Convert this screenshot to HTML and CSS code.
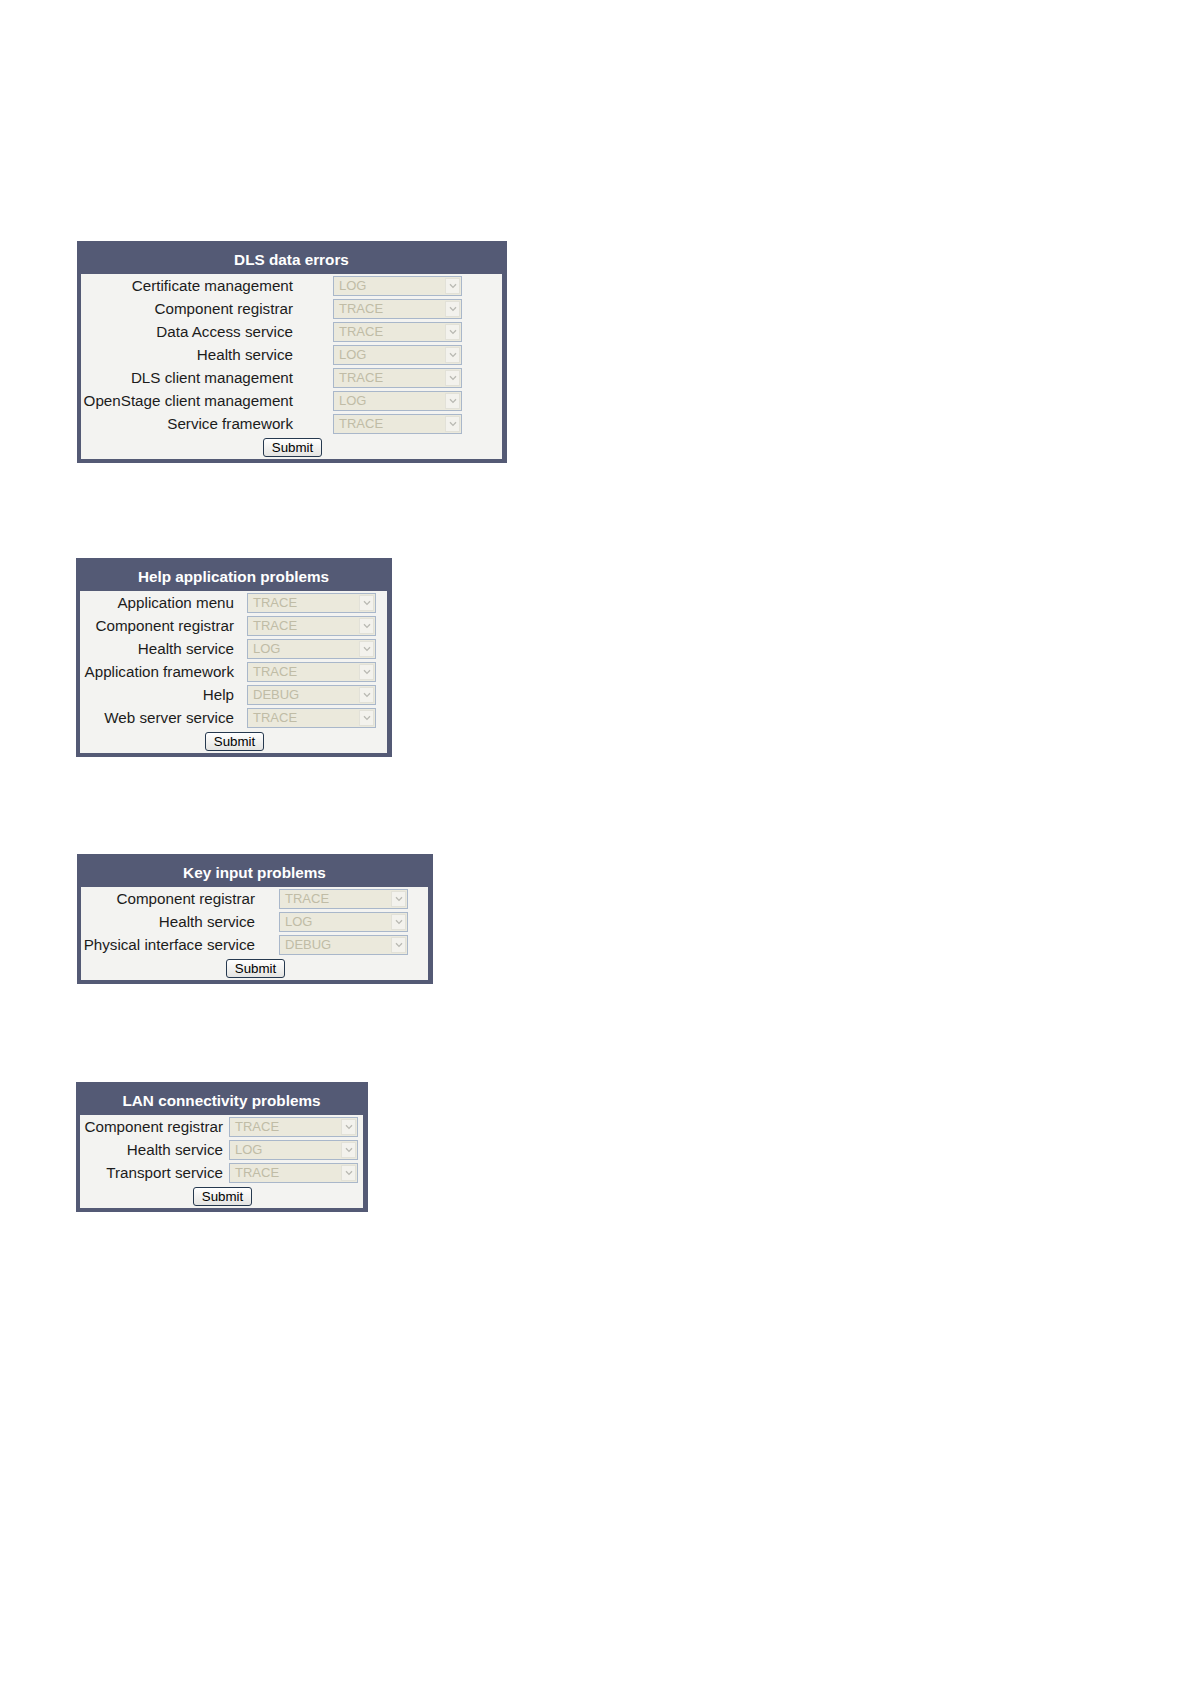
FILE: index.html
```html
<!DOCTYPE html>
<html lang="en">
<head>
<meta charset="utf-8">
<title>Trace levels</title>
<link rel="stylesheet" href="styles.css">
</head>
<body>
<main class="page">

  <section class="panel panel-dls">
    <h2 class="panel-head">DLS data errors</h2>
    <form class="panel-body">
      <div class="rows">
        <span class="lbl">Certificate management</span><div class="sel"><span class="val">LOG</span><span class="arr"><svg viewBox="0 0 8 6" width="8" height="6"><path d="M1 1.2 L4 4.4 L7 1.2" fill="none" stroke="#b9b9b3" stroke-width="1.3"/></svg></span></div>
        <span class="lbl">Component registrar</span><div class="sel"><span class="val">TRACE</span><span class="arr"><svg viewBox="0 0 8 6" width="8" height="6"><path d="M1 1.2 L4 4.4 L7 1.2" fill="none" stroke="#b9b9b3" stroke-width="1.3"/></svg></span></div>
        <span class="lbl">Data Access service</span><div class="sel"><span class="val">TRACE</span><span class="arr"><svg viewBox="0 0 8 6" width="8" height="6"><path d="M1 1.2 L4 4.4 L7 1.2" fill="none" stroke="#b9b9b3" stroke-width="1.3"/></svg></span></div>
        <span class="lbl">Health service</span><div class="sel"><span class="val">LOG</span><span class="arr"><svg viewBox="0 0 8 6" width="8" height="6"><path d="M1 1.2 L4 4.4 L7 1.2" fill="none" stroke="#b9b9b3" stroke-width="1.3"/></svg></span></div>
        <span class="lbl">DLS client management</span><div class="sel"><span class="val">TRACE</span><span class="arr"><svg viewBox="0 0 8 6" width="8" height="6"><path d="M1 1.2 L4 4.4 L7 1.2" fill="none" stroke="#b9b9b3" stroke-width="1.3"/></svg></span></div>
        <span class="lbl">OpenStage client management</span><div class="sel"><span class="val">LOG</span><span class="arr"><svg viewBox="0 0 8 6" width="8" height="6"><path d="M1 1.2 L4 4.4 L7 1.2" fill="none" stroke="#b9b9b3" stroke-width="1.3"/></svg></span></div>
        <span class="lbl">Service framework</span><div class="sel"><span class="val">TRACE</span><span class="arr"><svg viewBox="0 0 8 6" width="8" height="6"><path d="M1 1.2 L4 4.4 L7 1.2" fill="none" stroke="#b9b9b3" stroke-width="1.3"/></svg></span></div>
      </div>
      <div class="actions"><button type="button" class="submit">Submit</button></div>
    </form>
  </section>

  <section class="panel panel-help">
    <h2 class="panel-head">Help application problems</h2>
    <form class="panel-body">
      <div class="rows">
        <span class="lbl">Application menu</span><div class="sel"><span class="val">TRACE</span><span class="arr"><svg viewBox="0 0 8 6" width="8" height="6"><path d="M1 1.2 L4 4.4 L7 1.2" fill="none" stroke="#b9b9b3" stroke-width="1.3"/></svg></span></div>
        <span class="lbl">Component registrar</span><div class="sel"><span class="val">TRACE</span><span class="arr"><svg viewBox="0 0 8 6" width="8" height="6"><path d="M1 1.2 L4 4.4 L7 1.2" fill="none" stroke="#b9b9b3" stroke-width="1.3"/></svg></span></div>
        <span class="lbl">Health service</span><div class="sel"><span class="val">LOG</span><span class="arr"><svg viewBox="0 0 8 6" width="8" height="6"><path d="M1 1.2 L4 4.4 L7 1.2" fill="none" stroke="#b9b9b3" stroke-width="1.3"/></svg></span></div>
        <span class="lbl">Application framework</span><div class="sel"><span class="val">TRACE</span><span class="arr"><svg viewBox="0 0 8 6" width="8" height="6"><path d="M1 1.2 L4 4.4 L7 1.2" fill="none" stroke="#b9b9b3" stroke-width="1.3"/></svg></span></div>
        <span class="lbl">Help</span><div class="sel"><span class="val">DEBUG</span><span class="arr"><svg viewBox="0 0 8 6" width="8" height="6"><path d="M1 1.2 L4 4.4 L7 1.2" fill="none" stroke="#b9b9b3" stroke-width="1.3"/></svg></span></div>
        <span class="lbl">Web server service</span><div class="sel"><span class="val">TRACE</span><span class="arr"><svg viewBox="0 0 8 6" width="8" height="6"><path d="M1 1.2 L4 4.4 L7 1.2" fill="none" stroke="#b9b9b3" stroke-width="1.3"/></svg></span></div>
      </div>
      <div class="actions"><button type="button" class="submit">Submit</button></div>
    </form>
  </section>

  <section class="panel panel-key">
    <h2 class="panel-head">Key input problems</h2>
    <form class="panel-body">
      <div class="rows">
        <span class="lbl">Component registrar</span><div class="sel"><span class="val">TRACE</span><span class="arr"><svg viewBox="0 0 8 6" width="8" height="6"><path d="M1 1.2 L4 4.4 L7 1.2" fill="none" stroke="#b9b9b3" stroke-width="1.3"/></svg></span></div>
        <span class="lbl">Health service</span><div class="sel"><span class="val">LOG</span><span class="arr"><svg viewBox="0 0 8 6" width="8" height="6"><path d="M1 1.2 L4 4.4 L7 1.2" fill="none" stroke="#b9b9b3" stroke-width="1.3"/></svg></span></div>
        <span class="lbl">Physical interface service</span><div class="sel"><span class="val">DEBUG</span><span class="arr"><svg viewBox="0 0 8 6" width="8" height="6"><path d="M1 1.2 L4 4.4 L7 1.2" fill="none" stroke="#b9b9b3" stroke-width="1.3"/></svg></span></div>
      </div>
      <div class="actions"><button type="button" class="submit">Submit</button></div>
    </form>
  </section>

  <section class="panel panel-lan">
    <h2 class="panel-head">LAN connectivity problems</h2>
    <form class="panel-body">
      <div class="rows">
        <span class="lbl">Component registrar</span><div class="sel"><span class="val">TRACE</span><span class="arr"><svg viewBox="0 0 8 6" width="8" height="6"><path d="M1 1.2 L4 4.4 L7 1.2" fill="none" stroke="#b9b9b3" stroke-width="1.3"/></svg></span></div>
        <span class="lbl">Health service</span><div class="sel"><span class="val">LOG</span><span class="arr"><svg viewBox="0 0 8 6" width="8" height="6"><path d="M1 1.2 L4 4.4 L7 1.2" fill="none" stroke="#b9b9b3" stroke-width="1.3"/></svg></span></div>
        <span class="lbl">Transport service</span><div class="sel"><span class="val">TRACE</span><span class="arr"><svg viewBox="0 0 8 6" width="8" height="6"><path d="M1 1.2 L4 4.4 L7 1.2" fill="none" stroke="#b9b9b3" stroke-width="1.3"/></svg></span></div>
      </div>
      <div class="actions"><button type="button" class="submit">Submit</button></div>
    </form>
  </section>

</main>
</body>
</html>
```

FILE: styles.css
```css
html, body {
  margin: 0;
  padding: 0;
  background: #ffffff;
}

body {
  font-family: "Liberation Sans", Arial, sans-serif;
  color: #000;
}

.page {
  display: flex;
  flex-direction: column;
  align-items: flex-start;
  padding-top: 241px;
  padding-bottom: 200px;
}

.panel {
  box-sizing: border-box;
  border: 4px solid #545a75;
  border-top: 0;
  border-right-width: 5px;
  background: #545a75;
}

.panel-dls  { width: 430px; margin-left: 77px; }
.panel-help { width: 316px; margin-left: 76px; margin-top: 95px; }
.panel-key  { width: 356px; margin-left: 77px; margin-top: 97px; }
.panel-lan  { width: 292px; margin-left: 76px; margin-top: 98px; }

.panel-head {
  margin: 0;
  height: 33px;
  box-sizing: border-box;
  padding-top: 9px;
  line-height: 19px;
  font-size: 15.3px;
  font-weight: bold;
  color: #ffffff;
  text-align: center;
  white-space: nowrap;
}

.panel-body {
  margin: 0;
  background: #f3f3f1;
  padding: 2px 0 2px 0;
}

.rows {
  display: grid;
  grid-auto-rows: 20px;
  row-gap: 3px;
}

.panel-dls  .rows { grid-template-columns: 212px 129px; column-gap: 40px; }
.panel-help .rows { grid-template-columns: 154px 129px; column-gap: 13px; }
.panel-key  .rows { grid-template-columns: 174px 129px; column-gap: 24px; }
.panel-lan  .rows { grid-template-columns: 143px 129px; column-gap: 6px; }

.lbl {
  font-size: 15.2px;
  line-height: 20px;
  text-align: right;
  white-space: nowrap;
  color: #1c1c1c;
}

.sel {
  box-sizing: border-box;
  height: 20px;
  border: 1px solid #a9b7ca;
  background: #ebe9dc;
  display: flex;
  align-items: stretch;
}

.val {
  flex: 1;
  font-size: 13px;
  line-height: 18px;
  padding-left: 5px;
  color: #c0bca6;
}

.arr {
  width: 15px;
  margin: 1px 1px 1px 0;
  box-sizing: border-box;
  border: 1px solid #e2e1d8;
  background: #f3f2ed;
  display: flex;
  align-items: center;
  justify-content: center;
}

.actions {
  display: flex;
  justify-content: center;
  padding-top: 4px;
  padding-left: 2px;
}

.submit {
  box-sizing: border-box;
  width: 59px;
  height: 19px;
  padding: 0;
  border: 1px solid #26394f;
  border-radius: 3px;
  background: linear-gradient(#ffffff, #e4e4e2);
  font-family: "Liberation Sans", Arial, sans-serif;
  font-size: 13.3px;
  line-height: 17px;
  color: #000;
}
```
